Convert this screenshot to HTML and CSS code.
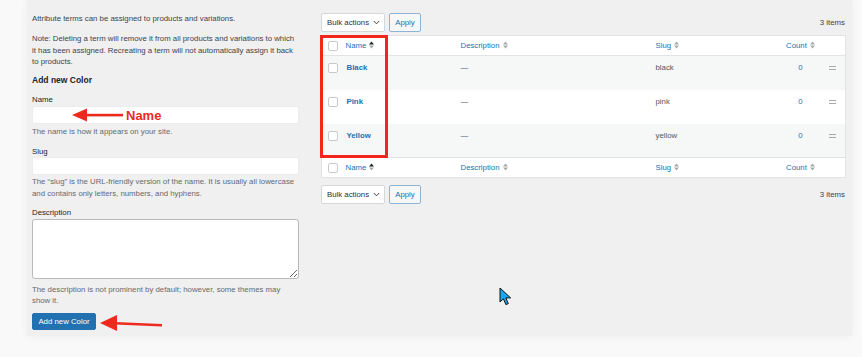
FILE: index.html
```html
<!DOCTYPE html>
<html lang="en">
<head>
    <meta charset="UTF-8">
    <title>Product attributes - Color</title>
    <link rel="stylesheet" href="styles.css">
</head>
<body>

<div class="screen">
    <div class="panel">

        <div class="col-left">
            <p class="intro">Attribute terms can be assigned to products and variations.</p>
            <p class="intro note">Note: Deleting a term will remove it from all products and variations to which it has been assigned. Recreating a term will not automatically assign it back to products.</p>

            <h2>Add new Color</h2>

            <div class="field field-name">
                <label>Name</label>
                <div class="input-wrap">
                    <input type="text" class="text-input">
                    <div class="callout">
                        <svg width="51" height="14" viewBox="0 0 51 14"><polygon points="0,7 15,0.5 15,13.5" fill="#ee2a1e"/><rect x="14" y="5.8" width="37" height="2.6" fill="#ee2a1e"/></svg>
                        <span>Name</span>
                    </div>
                </div>
                <p class="help">The name is how it appears on your site.</p>
            </div>

            <div class="field field-slug">
                <label>Slug</label>
                <input type="text" class="text-input">
                <p class="help">The “slug” is the URL-friendly version of the name. It is usually all lowercase and contains only letters, numbers, and hyphens.</p>
            </div>

            <div class="field field-desc">
                <label>Description</label>
                <textarea class="text-area"></textarea>
                <p class="help">The description is not prominent by default; however, some themes may show it.</p>
            </div>

            <div class="submit">
                <button class="btn-primary">Add new Color</button>
                <svg class="submit-arrow" width="63" height="18" viewBox="0 0 63 18"><polygon points="0,9 17,1 17,17" fill="#ee2a1e"/><polygon points="15,8 62,10 62,12.6 15,10.6" fill="#ee2a1e"/></svg>
            </div>
        </div>

        <div class="col-right">
            <div class="tablenav">
                <div class="bulk">Bulk actions <svg width="7" height="5" viewBox="0 0 7 5"><polyline points="0.8,1 3.5,3.8 6.2,1" fill="none" stroke="#3c434a" stroke-width="1"/></svg></div>
                <button class="apply">Apply</button>
                <span class="items">3 items</span>
            </div>

            <div class="table-wrap">
                <table class="terms">
                    <thead>
                        <tr>
                            <th class="c-cb"><span class="cb"></span></th>
                            <th class="c-name">Name <svg class="sort" width="5" height="8" viewBox="0 0 5 8"><polygon points="0,3.4 2.5,0.4 5,3.4" fill="#1d2327"/><polygon points="0,4.6 5,4.6 2.5,7.6" fill="#a7aaad"/></svg></th>
                            <th class="c-desc">Description <svg class="sort" width="5" height="8" viewBox="0 0 5 8"><polygon points="0,3.4 2.5,0.4 5,3.4" fill="#a7aaad"/><polygon points="0,4.6 5,4.6 2.5,7.6" fill="#a7aaad"/></svg></th>
                            <th class="c-slug">Slug <svg class="sort" width="5" height="8" viewBox="0 0 5 8"><polygon points="0,3.4 2.5,0.4 5,3.4" fill="#a7aaad"/><polygon points="0,4.6 5,4.6 2.5,7.6" fill="#a7aaad"/></svg></th>
                            <th class="c-count">Count <svg class="sort" width="5" height="8" viewBox="0 0 5 8"><polygon points="0,3.4 2.5,0.4 5,3.4" fill="#a7aaad"/><polygon points="0,4.6 5,4.6 2.5,7.6" fill="#a7aaad"/></svg></th>
                            <th class="c-handle"></th>
                        </tr>
                    </thead>
                    <tbody>
                        <tr class="alt">
                            <td class="c-cb"><span class="cb"></span></td>
                            <td class="c-name"><a href="#">Black</a></td>
                            <td class="c-desc">—</td>
                            <td class="c-slug">black</td>
                            <td class="c-count"><a href="#">0</a></td>
                            <td class="c-handle"><span class="handle"></span></td>
                        </tr>
                        <tr>
                            <td class="c-cb"><span class="cb"></span></td>
                            <td class="c-name"><a href="#">Pink</a></td>
                            <td class="c-desc">—</td>
                            <td class="c-slug">pink</td>
                            <td class="c-count"><a href="#">0</a></td>
                            <td class="c-handle"><span class="handle"></span></td>
                        </tr>
                        <tr class="alt">
                            <td class="c-cb"><span class="cb"></span></td>
                            <td class="c-name"><a href="#">Yellow</a></td>
                            <td class="c-desc">—</td>
                            <td class="c-slug">yellow</td>
                            <td class="c-count"><a href="#">0</a></td>
                            <td class="c-handle"><span class="handle"></span></td>
                        </tr>
                    </tbody>
                    <tfoot>
                        <tr>
                            <th class="c-cb"><span class="cb"></span></th>
                            <th class="c-name">Name <svg class="sort" width="5" height="8" viewBox="0 0 5 8"><polygon points="0,3.4 2.5,0.4 5,3.4" fill="#1d2327"/><polygon points="0,4.6 5,4.6 2.5,7.6" fill="#a7aaad"/></svg></th>
                            <th class="c-desc">Description <svg class="sort" width="5" height="8" viewBox="0 0 5 8"><polygon points="0,3.4 2.5,0.4 5,3.4" fill="#a7aaad"/><polygon points="0,4.6 5,4.6 2.5,7.6" fill="#a7aaad"/></svg></th>
                            <th class="c-slug">Slug <svg class="sort" width="5" height="8" viewBox="0 0 5 8"><polygon points="0,3.4 2.5,0.4 5,3.4" fill="#a7aaad"/><polygon points="0,4.6 5,4.6 2.5,7.6" fill="#a7aaad"/></svg></th>
                            <th class="c-count">Count <svg class="sort" width="5" height="8" viewBox="0 0 5 8"><polygon points="0,3.4 2.5,0.4 5,3.4" fill="#a7aaad"/><polygon points="0,4.6 5,4.6 2.5,7.6" fill="#a7aaad"/></svg></th>
                            <th class="c-handle"></th>
                        </tr>
                    </tfoot>
                </table>
                <!-- red highlight drawn over the name column -->
                <div class="highlight"></div>
            </div>

            <div class="tablenav tablenav-bottom">
                <div class="bulk">Bulk actions <svg width="7" height="5" viewBox="0 0 7 5"><polyline points="0.8,1 3.5,3.8 6.2,1" fill="none" stroke="#3c434a" stroke-width="1"/></svg></div>
                <button class="apply">Apply</button>
                <span class="items">3 items</span>
            </div>
        </div>

    </div>

    <svg class="cursor" width="14" height="19" viewBox="0 0 14 19"><path d="M1 1 L1 15 L4.4 11.8 L6.9 17.6 L9.3 16.6 L6.8 10.9 L11.6 10.9 Z" fill="#1ba6f2" stroke="#111" stroke-width="1" stroke-linejoin="round"/></svg>
</div>

</body>
</html>
```

FILE: styles.css
```css
* { box-sizing: border-box; }
body { margin: 0; background-color: #f9f9f9; font-family: "Liberation Sans", Arial, sans-serif; font-size: 7.8px; color: #3c434a; }
.screen { position: relative; width: 862px; height: 357px; overflow: hidden; }

.panel {
    display: flex;
    gap: 22px;
    width: 825px;
    margin-left: 27px;
    padding: 13px 7px 6px 5px;
    background-color: #f0f0f1;
    box-shadow: 0 0 10px rgba(0, 0, 0, 0.05);
}

/* left form column */
.col-left { width: 267px; flex-shrink: 0; }
.intro { margin: 0; line-height: 11.5px; }
.note { margin-top: 8.5px; }
h2 { margin: 6.5px 0 0; font-size: 8.5px; line-height: 12px; font-weight: bold; color: #1d2327; }

.field label { display: block; line-height: 11px; color: #1d2327; }
.field-name label { margin-top: 7.5px; }
.field-slug label { margin-top: 8.5px; }
.field-desc label { margin-top: 8px; }

.text-input { display: block; width: 100%; height: 18px; margin: 0.5px 0 0; border: 1px solid #ececec; border-radius: 2px; background: #fff; }
.field-name .input-wrap { position: relative; margin-top: 1.5px; }
.field-name .text-input { margin: 0; }
.text-area { display: block; width: 100%; height: 60px; margin: 0.5px 0 0; border: 1px solid #b7b9bc; border-radius: 3px; background: #fff; }

.help { margin: 1.5px 0 0; line-height: 11.5px; color: #646970; }
.field-slug .help { margin-top: 1px; }
.field-desc .help { margin-top: 5.5px; line-height: 11px; }

/* red annotation next to the name input */
.callout { position: absolute; left: 40px; top: 0; height: 18px; display: flex; align-items: center; gap: 3px; }
.callout span { font-size: 13px; font-weight: bold; color: #ee2a1e; line-height: 1; }

.submit { position: relative; margin-top: 7px; height: 17px; }
.btn-primary {
    width: 64px; height: 17px; padding: 0;
    border: 1px solid #2271b1; border-radius: 2px;
    background-color: #2271b1; color: #fff;
    font-family: inherit; font-size: 7.8px;
}
.submit-arrow { position: absolute; left: 68px; top: 1px; }

/* right list column */
.col-right { width: 524px; flex-shrink: 0; }
.tablenav { display: flex; align-items: center; gap: 4px; height: 19px; }
.tablenav-bottom { margin-top: 7px; }
.bulk {
    display: flex; align-items: center; justify-content: space-between;
    width: 64px; height: 19px; padding: 0 4px 0 5px;
    background: #fff; border: 1px solid #d6d7d9; border-radius: 2px;
    color: #2c3338;
}
.apply {
    width: 32px; height: 19px; padding: 0;
    background: #f6f7f7; border: 1px solid #8fb3d3; border-radius: 2px;
    color: #2271b1; font-family: inherit; font-size: 7.8px;
}
.items { margin-left: auto; color: #3c434a; }

.table-wrap { position: relative; margin-top: 3px; }
.terms { width: 524px; border-collapse: collapse; table-layout: fixed; background: #fff; border: 1px solid #e2e3e5; }
.terms th { height: 20px; padding: 0 5px; font-weight: normal; text-align: left; color: #2271b1; line-height: 11px; vertical-align: middle; white-space: nowrap; }
.terms thead th { border-bottom: 1px solid #e2e3e5; }
.terms tfoot th { border-top: 1px solid #e2e3e5; }
.terms td { height: 34px; padding: 6px 5px 0; line-height: 11px; vertical-align: top; color: #50575e; }
.terms tr.alt td { background-color: #f6f7f7; }
.terms a { color: #2271b1; text-decoration: none; }
.terms .c-name a { font-weight: bold; padding-left: 1px; }
.sort { vertical-align: -1px; margin-left: 1px; }

.c-cb { width: 19px; }
.c-name { width: 115px; }
.c-desc { width: 195px; }
.c-slug { width: 130px; }
.c-count { width: 40px; }
.c-handle { width: 25px; }
.terms .c-count { text-align: center; padding: 0; }
.terms td.c-count { padding-top: 6px; }
.terms .c-cb { padding: 0 0 0 6px; }
.terms td.c-cb { padding-top: 7px; }
.terms td.c-handle { text-align: center; padding: 10px 0 0; }

.cb { display: block; width: 10px; height: 10px; background: #fff; border: 1px solid #c8cacd; border-radius: 2px; }
.handle { display: block; width: 7px; height: 4px; margin: 0 auto; border-top: 1px solid #a7aaad; border-bottom: 1px solid #a7aaad; }

.highlight { position: absolute; left: -1px; top: 0; width: 68px; height: 123px; border: 3px solid #f2261b; }

.cursor { position: absolute; left: 499px; top: 287px; }
```
